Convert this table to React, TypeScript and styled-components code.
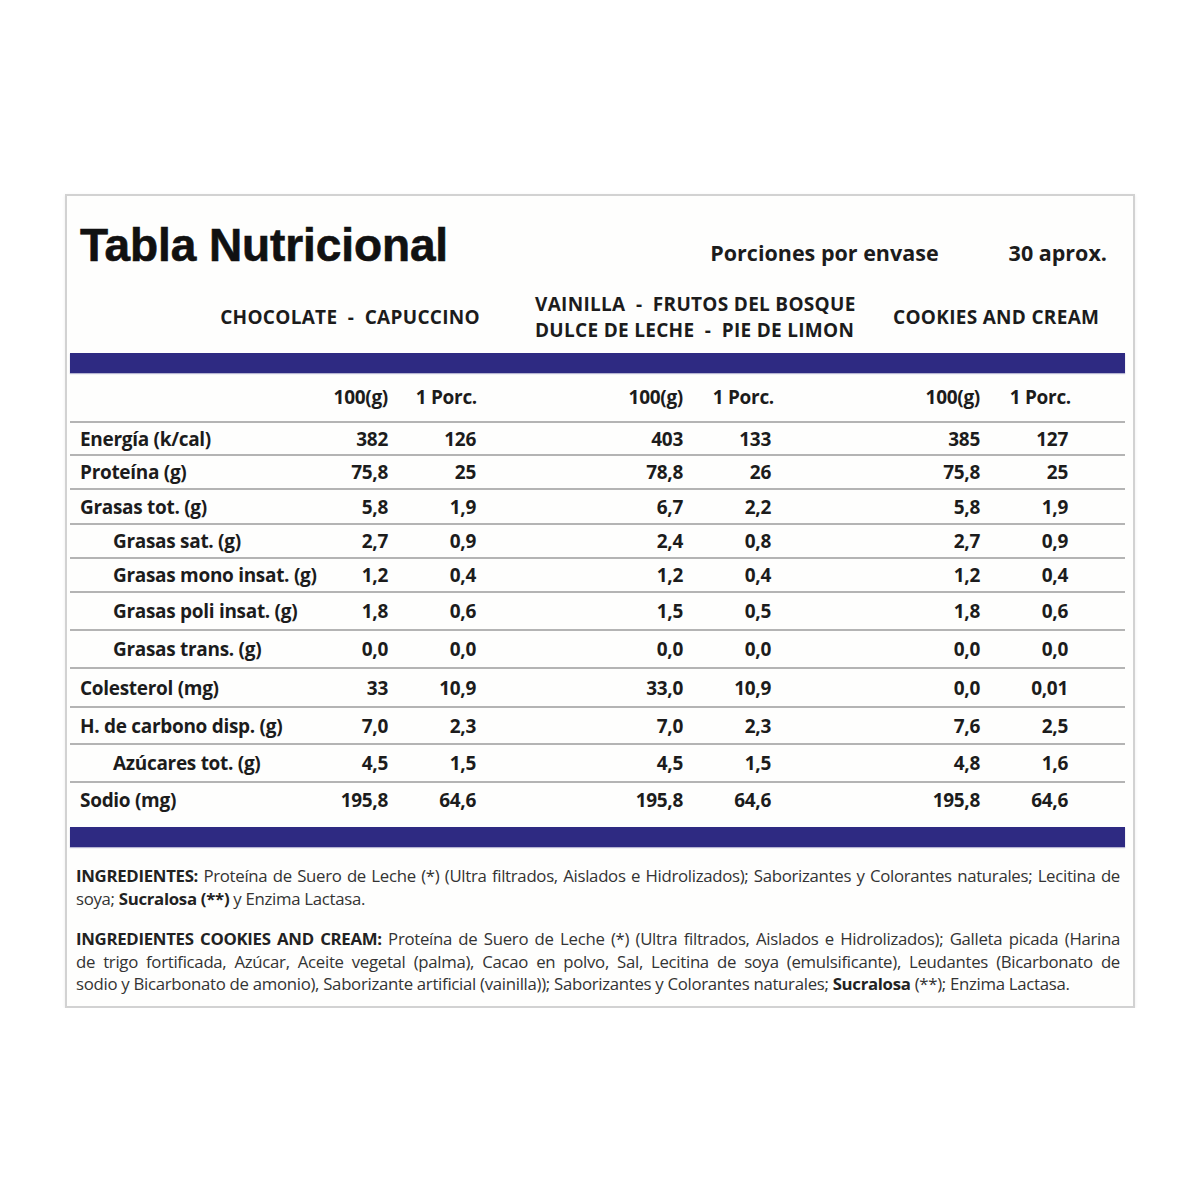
import React from "react";
import styled, { createGlobalStyle } from "styled-components";

const GlobalStyle = createGlobalStyle`
  html, body {
    margin: 0;
    padding: 0;
    background: #ffffff;
  }
  body {
    font-family: "Open Sans", "Noto Sans", sans-serif;
    color: #1a1a1a;
  }
`;

// label | 100g | porc | gap | 100g | porc | gap | 100g | porc | rest
const COLS = "230px 88px 88px 119px 88px 88px 121px 88px 88px 1fr";

const Page = styled.div`
  width: 1200px;
  padding: 194px 0 0 65px;
  box-sizing: border-box;
`;

const Card = styled.section`
  width: 1070px;
  box-sizing: border-box;
  border: 2px solid #d2d2d2;
  box-shadow: 0 1px 3px rgba(0, 0, 0, 0.08);
  background: #fefefd;
  padding: 0 8px 10px 3px;
  display: flex;
  flex-direction: column;

  & > * {
    flex-shrink: 0;
  }
`;

const TopRow = styled.header`
  display: flex;
  align-items: baseline;
  padding: 26px 18px 0 10px;
`;

const Title = styled.h1`
  margin: 0;
  font-family: "Liberation Sans", Arial, sans-serif;
  font-weight: 700;
  font-size: 46px;
  line-height: 46px;
  letter-spacing: -0.1px;
  -webkit-text-stroke: 0.6px #111;
  color: #111;
  flex: 1;
`;

const Servings = styled.span`
  font-size: 21.5px;
  font-weight: 700;
  letter-spacing: 0;
  color: #1c1c1c;
`;

const ServingsValue = styled(Servings)`
  margin-left: 70px;
`;

const FlavorRow = styled.div`
  display: grid;
  grid-template-columns: 410px 413px 1fr;
  align-items: center;
  height: 57px;
  margin-top: 20px;
`;

const Flavor = styled.div<{ $align?: "left" | "right"; $indent?: number }>`
  font-size: 19px;
  font-weight: 700;
  letter-spacing: 0.3px;
  line-height: 26px;
  white-space: pre;
  color: #1c1c1c;
  text-align: ${(p) => p.$align ?? "left"};
  padding-left: ${(p) => p.$indent ?? 0}px;
`;

const Band = styled.div<{ $top?: number }>`
  height: 20px;
  margin-top: ${(p) => p.$top ?? 0}px;
  background: #2e2a82;
  box-shadow: 0 1px 1px rgba(46, 42, 130, 0.35);
`;

const Row = styled.div<{ $h: number; $last?: boolean }>`
  display: grid;
  grid-template-columns: ${COLS};
  align-items: center;
  height: ${(p) => p.$h}px;
  box-sizing: border-box;
  border-bottom: ${(p) => (p.$last ? "none" : "2px solid #b4b4b4")};
  font-size: 19px;
  font-weight: 700;
  letter-spacing: -0.3px;
  color: #1c1c1c;
`;

const Label = styled.div<{ $sub?: boolean }>`
  padding-left: ${(p) => (p.$sub ? 43 : 10)}px;
  white-space: nowrap;
`;

const Num = styled.div<{ $col: number }>`
  grid-column: ${(p) => p.$col};
  text-align: right;
  white-space: nowrap;
`;

const HeadNum = styled(Num)<{ $nudge?: number }>`
  margin-right: ${(p) => -(p.$nudge ?? 0)}px;
`;

const Ingredients = styled.div`
  padding: 18px 5px 0 6px;
  font-size: 16.8px;
  line-height: 22.5px;
  color: #333;
  letter-spacing: -0.3px;
`;

const Para = styled.p`
  margin: 0 0 18px;

  &:last-child {
    margin-bottom: 0;
  }
`;

const Line = styled.span<{ $end?: boolean }>`
  display: block;
  text-align: justify;
  text-align-last: ${(p) => (p.$end ? "left" : "justify")};
`;

const Strong = styled.b`
  font-weight: 700;
  color: #222;
`;

type Nutrient = {
  label: string;
  sub?: boolean;
  h: number;
  v: [string, string, string, string, string, string];
};

const rows: Nutrient[] = [
  { label: "Energía (k/cal)", h: 33, v: ["382", "126", "403", "133", "385", "127"] },
  { label: "Proteína (g)", h: 34, v: ["75,8", "25", "78,8", "26", "75,8", "25"] },
  { label: "Grasas tot. (g)", h: 35, v: ["5,8", "1,9", "6,7", "2,2", "5,8", "1,9"] },
  { label: "Grasas sat. (g)", sub: true, h: 34, v: ["2,7", "0,9", "2,4", "0,8", "2,7", "0,9"] },
  { label: "Grasas mono insat. (g)", sub: true, h: 34, v: ["1,2", "0,4", "1,2", "0,4", "1,2", "0,4"] },
  { label: "Grasas poli insat. (g)", sub: true, h: 38, v: ["1,8", "0,6", "1,5", "0,5", "1,8", "0,6"] },
  { label: "Grasas trans. (g)", sub: true, h: 38, v: ["0,0", "0,0", "0,0", "0,0", "0,0", "0,0"] },
  { label: "Colesterol (mg)", h: 39, v: ["33", "10,9", "33,0", "10,9", "0,0", "0,01"] },
  { label: "H. de carbono disp. (g)", h: 37, v: ["7,0", "2,3", "7,0", "2,3", "7,6", "2,5"] },
  { label: "Azúcares tot. (g)", sub: true, h: 38, v: ["4,5", "1,5", "4,5", "1,5", "4,8", "1,6"] },
  { label: "Sodio (mg)", h: 33, v: ["195,8", "64,6", "195,8", "64,6", "195,8", "64,6"] },
];

const valueCols = [2, 3, 5, 6, 8, 9];

export default function App() {
  return (
    <>
      <GlobalStyle />
      <Page>
        <Card>
          <TopRow>
            <Title>Tabla Nutricional</Title>
            <Servings>Porciones por envase</Servings>
            <ServingsValue>30 aprox.</ServingsValue>
          </TopRow>

          <FlavorRow>
            <Flavor $align="right">{"CHOCOLATE  -  CAPUCCINO"}</Flavor>
            <Flavor $indent={55}>
              {"VAINILLA  -  FRUTOS DEL BOSQUE"}
              <br />
              {"DULCE DE LECHE  -  PIE DE LIMON"}
            </Flavor>
            <Flavor>COOKIES AND CREAM</Flavor>
          </FlavorRow>

          <Band $top={8} />

          <Row $h={50}>
            {valueCols.map((c, i) => (
              <HeadNum key={c} $col={c} $nudge={i % 2 === 1 ? (i === 1 ? 1 : 3) : 0}>
                {i % 2 === 0 ? "100(g)" : "1 Porc."}
              </HeadNum>
            ))}
          </Row>

          {rows.map((r, idx) => (
            <Row key={r.label} $h={r.h} $last={idx === rows.length - 1}>
              <Label $sub={r.sub}>{r.label}</Label>
              {r.v.map((val, i) => (
                <Num key={i} $col={valueCols[i]}>
                  {val}
                </Num>
              ))}
            </Row>
          ))}

          <Band $top={11} />

          <Ingredients>
            <Para>
              <Line>
                <Strong>INGREDIENTES:</Strong> Proteína de Suero de Leche (*) (Ultra filtrados, Aislados e
                Hidrolizados); Saborizantes y Colorantes naturales; Lecitina de
              </Line>
              <Line $end>
                soya; <Strong>Sucralosa (**)</Strong> y Enzima Lactasa.
              </Line>
            </Para>
            <Para>
              <Line>
                <Strong>INGREDIENTES COOKIES AND CREAM:</Strong> Proteína de Suero de Leche (*) (Ultra
                filtrados, Aislados e Hidrolizados); Galleta picada (Harina
              </Line>
              <Line>
                de trigo fortificada, Azúcar, Aceite vegetal (palma), Cacao en polvo, Sal, Lecitina de
                soya (emulsificante), Leudantes (Bicarbonato de
              </Line>
              <Line $end>
                sodio y Bicarbonato de amonio), Saborizante artificial (vainilla)); Saborizantes y
                Colorantes naturales; <Strong>Sucralosa</Strong> (**); Enzima Lactasa.
              </Line>
            </Para>
          </Ingredients>
        </Card>
      </Page>
    </>
  );
}
